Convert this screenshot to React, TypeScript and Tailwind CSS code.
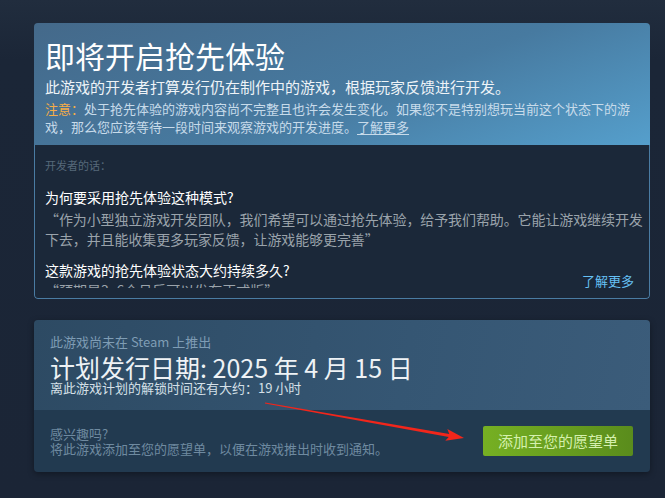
import React from "react";

const CJK = "font-['Microsoft_YaHei','Noto_Sans_CJK_SC',sans-serif]";

function EarlyAccessCard() {
  return (
    <div className="w-[616px] overflow-hidden rounded-[4px]">
      {/* Header */}
      <div className="bg-[linear-gradient(160deg,#44698a_0%,#477aa0_55%,#559fcc_100%)] px-[11px] pt-[14px] pb-[9px]">
        <h1 className="text-[30px] leading-[36px] font-normal text-white">
          即将开启抢先体验
        </h1>
        <p className="mt-[4px] text-[15px] leading-[20px] text-[#eef3f7]">
          此游戏的开发者打算发行仍在制作中的游戏，根据玩家反馈进行开发。
        </p>
        <p className="mt-[3px] text-[13px] leading-[18px] text-[#c7dbea]">
          <span className="text-[#f6ad47]">注意：</span>
          处于抢先体验的游戏内容尚不完整且也许会发生变化。如果您不是特别想玩当前这个状态下的游戏，那么您应该等待一段时间来观察游戏的开发进度。
          <span className="underline underline-offset-2">了解更多</span>
        </p>
      </div>

      {/* Developer notes */}
      <div className="relative rounded-b-[4px] border-x border-b border-[#4a7ca3] bg-[#1b2839] pb-[10px]">
        <div className="h-[143px] overflow-hidden pt-[12px] pr-[2px] pl-[10px]">
          <p className="text-[11px] leading-[16px] text-[#56697a]">开发者的话：</p>
          <h3 className="mt-[14px] text-[14px] leading-[20px] text-white">
            为何要采用抢先体验这种模式?
          </h3>
          <p className="mt-[2px] text-[14px] leading-[20px] tracking-[-0.1px] text-[#9aa3ab]">
            “作为小型独立游戏开发团队，我们希望可以通过抢先体验，给予我们帮助。它能让游戏继续开发下去，并且能收集更多玩家反馈，让游戏能够更完善”
          </p>
          <h3 className="mt-[11px] text-[14px] leading-[20px] text-white">
            这款游戏的抢先体验状态大约持续多久?
          </h3>
          <p className="text-[14px] leading-[20px] text-[#9aa3ab]">
            “预期是3~6个月后可以发布正式版”
          </p>
        </div>
        <span className="absolute right-[15px] bottom-[9px] text-[13px] leading-[16px] text-[#66c0f4]">
          了解更多
        </span>
      </div>
    </div>
  );
}

function ReleaseCard() {
  return (
    <div className="mt-[21px] w-[616px] overflow-hidden rounded-[4px] shadow-[0_2px_6px_rgba(0,0,0,0.35)]">
      <div className="bg-[linear-gradient(100deg,#2d4a63_0%,#355673_60%,#3b5c7a_100%)] px-[16px] pt-[13px] pb-[14px]">
        <p className="text-[13px] leading-[18px] text-[#7f9db5]">
          此游戏尚未在 Steam 上推出
        </p>
        <p className="mt-[1px] text-[25px] leading-[30px] font-normal text-[#eef2f5]">
          计划发行日期: 2025 年 4 月 15 日
        </p>
        <p className="mt-[-2px] text-[13px] leading-[16px] text-[#d5e0e8]">
          离此游戏计划的解锁时间还有大约：19 小时
        </p>
      </div>
      <div className="flex items-center justify-between bg-[#223a50] py-[16px] pr-[17px] pl-[16px]">
        <div className="text-[13px] leading-[15px] text-[#6f8aa0]">
          <p>感兴趣吗?</p>
          <p>将此游戏添加至您的愿望单，以便在游戏推出时收到通知。</p>
        </div>
        <button className="h-[30px] w-[150px] rounded-[2px] bg-[linear-gradient(90deg,#76b023_0%,#5a8c1c_100%)] text-[15px] text-[#d5f0ad]">
          添加至您的愿望单
        </button>
      </div>
    </div>
  );
}

export default function App() {
  return (
    <div
      className={`relative min-h-[498px] w-full bg-[linear-gradient(180deg,#212d3e_0%,#1b2637_12%,#1b2536_100%)] pt-[23px] pl-[34px] ${CJK}`}
    >
      <EarlyAccessCard />
      <ReleaseCard />

      {/* annotation arrow */}
      <svg
        className="pointer-events-none absolute top-0 left-0"
        width="665"
        height="498"
        viewBox="0 0 665 498"
      >
        <polygon
          points="265.1,402.5 449.3,433.9 447.3,429 464,438 445.3,440.8 448.7,436.9 264.9,403.5"
          fill="#f2261b"
        />
      </svg>
    </div>
  );
}
